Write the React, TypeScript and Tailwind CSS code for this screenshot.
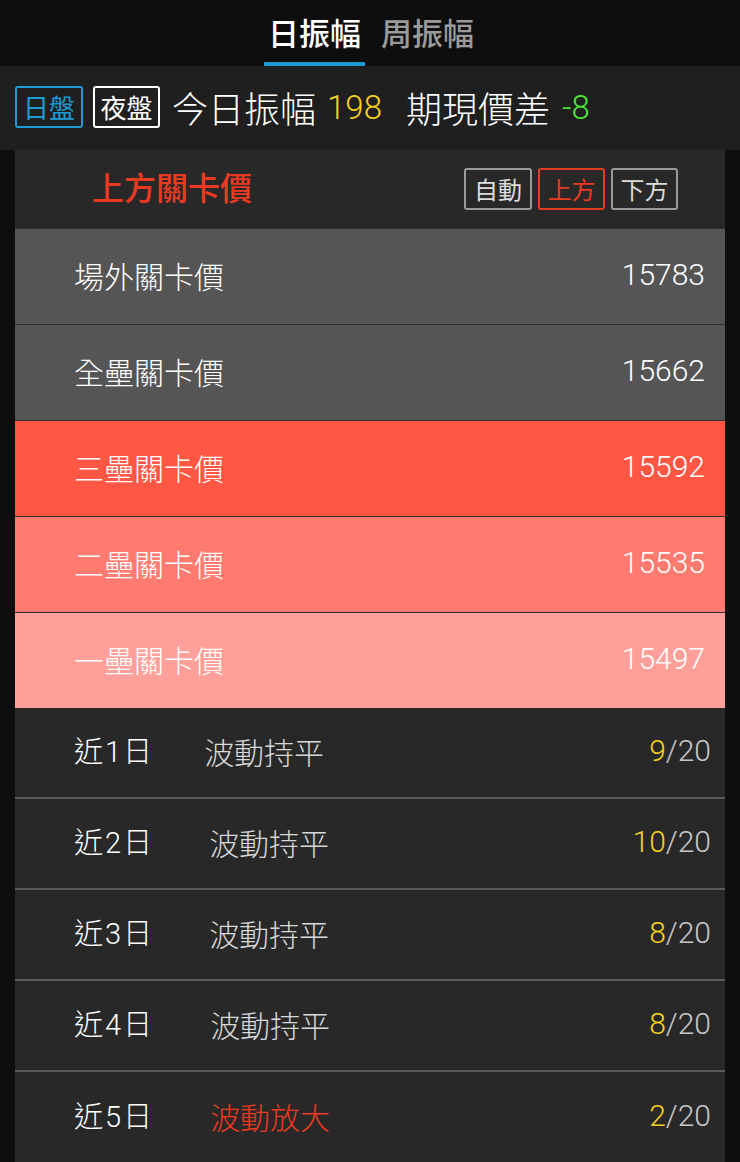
import React from 'react';

const font = { fontFamily: '"Noto Sans CJK TC", "Noto Sans", sans-serif' };
const num = { fontFamily: 'Roboto, "Liberation Sans", sans-serif' };

const levels = [
  { name: '場外關卡價', value: 15783, bg: 'bg-[#555555]' },
  { name: '全壘關卡價', value: 15662, bg: 'bg-[#555555]' },
  { name: '三壘關卡價', value: 15592, bg: 'bg-[#ff5743]' },
  { name: '二壘關卡價', value: 15535, bg: 'bg-[#ff7b6f]' },
  { name: '一壘關卡價', value: 15497, bg: 'bg-[#ff9f99]' },
];

const history = [
  { d: '1', status: '波動持平', hit: 9, gap: 'ml-[52px]', red: false },
  { d: '2', status: '波動持平', hit: 10, gap: 'ml-[57px]', red: false },
  { d: '3', status: '波動持平', hit: 8, gap: 'ml-[57px]', red: false },
  { d: '4', status: '波動持平', hit: 8, gap: 'ml-[58px]', red: false },
  { d: '5', status: '波動放大', hit: 2, gap: 'ml-[58px]', red: true },
];

export default function App() {
  return (
    <div className="w-[740px] h-[1162px] bg-[#0e0e0e] overflow-hidden text-white" style={font}>
      {/* tabs */}
      <div className="h-[66px] bg-[#0e0e0e] flex justify-center items-stretch">
        <div className="flex gap-[16px] mr-[2px]">
          <div className="relative flex items-center px-[4px] pb-[4px]">
            <span className="text-[31px] font-medium leading-none text-white">日振幅</span>
            <div className="absolute left-0 right-0 bottom-0 h-[4px] bg-[#1a9bd7]" />
          </div>
          <div className="flex items-center pb-[4px]">
            <span className="text-[31px] font-medium leading-none text-[#9a9a9a]">周振幅</span>
          </div>
        </div>
      </div>

      {/* summary */}
      <div className="h-[84px] bg-[#1f1f1f] flex items-center pl-[15px] pb-[2px]">
        <span className="h-[42px] w-[68px] flex items-center justify-center border-2 border-[#1e9bd7] rounded-[3px] text-[26px] leading-none text-[#1e9bd7]">日盤</span>
        <span className="ml-[10px] h-[42px] w-[67px] flex items-center justify-center border-2 border-white rounded-[3px] text-[26px] leading-none">夜盤</span>
        <span className="ml-[12px] text-[36px] leading-none font-light">今日振幅</span>
        <span className="ml-[11px] text-[33px] leading-none text-[#f7d21d] font-light" style={num}>198</span>
        <span className="ml-[24px] text-[36px] leading-none font-light">期現價差</span>
        <span className="ml-[12px] text-[33px] leading-none text-[#4be838] font-light" style={num}>-8</span>
      </div>

      {/* panel */}
      <div className="mx-[15px] bg-[#282828]">
        <div className="h-[78px] flex items-center justify-between pl-[77px] pr-[47px] pb-[6px]">
          <span className="text-[32px] font-medium leading-none text-[#ec3a22]">上方關卡價</span>
          <div className="flex gap-[6px] pt-[6px]">
            <span className="w-[68px] h-[42px] flex items-center justify-center border-2 border-[#9a9a9a] rounded-[3px] text-[24px] leading-none text-[#dcdcdc]">自動</span>
            <span className="w-[67px] h-[42px] flex items-center justify-center border-2 border-[#e33b24] rounded-[3px] text-[24px] leading-none text-[#ec3a22]">上方</span>
            <span className="w-[67px] h-[42px] flex items-center justify-center border-2 border-[#9a9a9a] rounded-[3px] text-[24px] leading-none text-[#dcdcdc]">下方</span>
          </div>
        </div>

        {levels.map((l) => (
          <div
            key={l.name}
            className={`h-[96px] flex items-center justify-between pl-[59px] pr-[20px] pb-[4px] border-t border-[#303030] ${l.bg}`}
          >
            <span className="text-[30px] leading-none font-light">{l.name}</span>
            <span className="text-[30px] leading-none font-light" style={num}>{l.value}</span>
          </div>
        ))}

        {history.map((h, i) => (
          <div
            key={h.d}
            className={`h-[91px] flex items-center pl-[59px] pr-[14px] pb-[4px] ${i < history.length - 1 ? 'border-b-2 border-[#5a5a5a]' : ''}`}
          >
            <span className="text-[29px] leading-none font-light">
              近<span className="mx-[2px]" style={num}>{h.d}</span>日
            </span>
            <span className={`${h.gap} text-[30px] leading-none font-light ${h.red ? 'text-[#ec3a22]' : 'text-[#d8d8d8]'}`}>{h.status}</span>
            <span className="ml-auto text-[30px] leading-none font-light" style={num}>
              <span className="text-[#f7d21d]">{h.hit}</span>
              <span className="text-[#c8c8c8]">/20</span>
            </span>
          </div>
        ))}
      </div>
    </div>
  );
}
